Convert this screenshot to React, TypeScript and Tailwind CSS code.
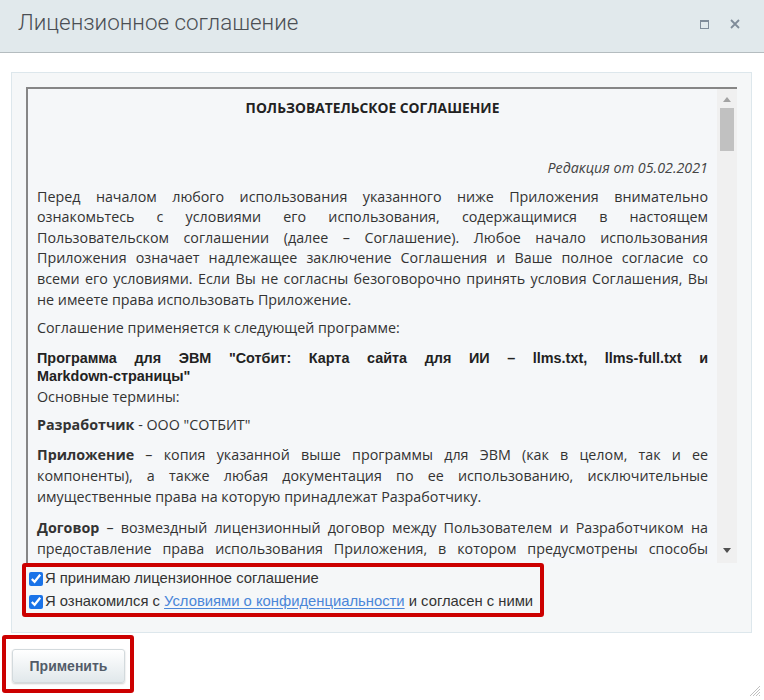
import React from 'react';

type Line = React.ReactNode;

const para1: Line[] = [
  'Перед началом любого использования указанного ниже Приложения внимательно',
  'ознакомьтесь с условиями его использования, содержащимися в настоящем',
  'Пользовательском соглашении (далее – Соглашение). Любое начало использования',
  'Приложения означает надлежащее заключение Соглашения и Ваше полное согласие со',
  'всеми его условиями. Если Вы не согласны безоговорочно принять условия Соглашения, Вы',
  'не имеете права использовать Приложение.',
];

const appLines: Line[] = [
  <><b className="font-bold">Приложение</b> – копия указанной выше программы для ЭВМ (как в целом, так и ее</>,
  'компоненты), а также любая документация по ее использованию, исключительные',
  'имущественные права на которую принадлежат Разработчику.',
];

const contractLines: Line[] = [
  <><b className="font-bold">Договор</b> – возмездный лицензионный договор между Пользователем и Разработчиком на</>,
  'предоставление права использования Приложения, в котором предусмотрены способы',
  'использования Приложения, размер вознаграждения и иные существенные условия.',
];

// each line is its own block so the breaks match; all but the last are justified
const Justified: React.FC<{ lines: Line[]; className?: string }> = ({ lines, className }) => (
  <div className={className}>
    {lines.map((l, i) => (
      <div
        key={i}
        className={i < lines.length - 1 ? 'whitespace-nowrap text-justify [text-align-last:justify]' : 'whitespace-nowrap'}
      >
        {l}
      </div>
    ))}
  </div>
);

const App: React.FC = () => {
  return (
    <div className="w-[764px] h-[700px] bg-white relative overflow-hidden flex flex-col font-['Liberation_Sans',Arial,sans-serif]">
      {/* Header */}
      <div className="h-[53px] shrink-0 bg-[#e1e9ec] border-b border-[#b4bcbf] flex items-center pl-[18px] pr-[24px]">
        <h1 className="flex-1 text-[22.4px] font-light text-[#4b4f54] font-['Roboto',sans-serif] pb-[6px]">
          Лицензионное соглашение
        </h1>
        <div className="flex items-center gap-[21px] pb-[4px]">
          <div className="w-[9px] h-[9px] border border-[#7f8c99] border-t-2" />
          <svg width="10" height="10" viewBox="0 0 10 10">
            <path d="M1 1 L9 9 M9 1 L1 9" stroke="#7f8c99" strokeWidth="1.8" />
          </svg>
        </div>
      </div>

      {/* Body */}
      <div className="flex-1 px-[11px] pt-[19px] flex flex-col">
        <div className="w-[741px] bg-[#f5f7f8] border border-[#dde7ec] px-[14px] pt-[14px] pb-[15px]">
          {/* Agreement frame */}
          <div className="h-[476px] flex border-l-2 border-t-2 border-[#868686] bg-[#f5f7f9] font-['Open_Sans',sans-serif] text-[14.3px] text-[#333] overflow-hidden">
            <div className="flex-1 pl-[9px] pr-[9px] pt-[9px] overflow-hidden">
              <div className="text-center font-bold text-[13.8px] leading-[20px] text-[#222]">
                ПОЛЬЗОВАТЕЛЬСКОЕ СОГЛАШЕНИЕ
              </div>
              <div className="mt-[40px] text-right italic leading-[20.6px] text-[#444]">Редакция от 05.02.2021</div>
              <Justified lines={para1} className="mt-[8px] leading-[20.6px]" />
              <div className="mt-[8px] leading-[20.6px]">Соглашение применяется к следующей программе:</div>
              <Justified
                className="mt-[10px] leading-[18px] font-['Liberation_Sans',Arial,sans-serif] font-bold text-[14.4px] text-[#222]"
                lines={['Программа для ЭВМ "Сотбит: Карта сайта для ИИ – llms.txt, llms-full.txt и', 'Markdown-страницы"']}
              />
              <div className="mt-[2px] leading-[20.6px]">Основные термины:</div>
              <div className="mt-[8px] leading-[20.6px]">
                <b className="font-bold">Разработчик</b> - ООО "СОТБИТ"
              </div>
              <Justified lines={appLines} className="mt-[9px] leading-[20.9px]" />
              <Justified lines={contractLines} className="mt-[10px] leading-[20.9px]" />
            </div>
            {/* scrollbar */}
            <div className="w-[20px] shrink-0 bg-[#f0f0f0] flex flex-col items-center">
              <svg width="8" height="5" viewBox="0 0 8 5" className="mt-[8px]">
                <path d="M0 5 L4 0 L8 5 Z" fill="#a3a3a3" />
              </svg>
              <div className="w-[14px] h-[43px] bg-[#c1c1c1] mt-[6px]" />
              <div className="flex-1" />
              <svg width="8" height="5" viewBox="0 0 8 5" className="mb-[10px]">
                <path d="M0 0 L8 0 L4 5 Z" fill="#505050" />
              </svg>
            </div>
          </div>

          {/* Checkboxes */}
          <div className="-ml-[4px] w-[522px] border-[4px] border-[#cc0000] rounded-[3px] pl-[3px] text-[14.8px] text-[#333] leading-[23px]">
            <label className="flex items-center gap-[2px]">
              <input type="checkbox" defaultChecked className="w-[14px] h-[14px] m-0 accent-[#1a73e8]" />
              <span>Я принимаю лицензионное соглашение</span>
            </label>
            <label className="flex items-center gap-[2px]">
              <input type="checkbox" defaultChecked className="w-[14px] h-[14px] m-0 accent-[#1a73e8]" />
              <span className="whitespace-nowrap">
                Я ознакомился с{' '}
                <a href="#" className="text-[#4a86d8] underline underline-offset-2">
                  Условиями о конфиденциальности
                </a>{' '}
                и согласен с ними
              </span>
            </label>
          </div>
        </div>

        {/* Apply */}
        <div className="mt-[2px] -ml-[9px] w-[132px] h-[58px] border-[4px] border-[#cc0000] rounded-[3px] pl-[6px] pt-[10px]">
          <button className="w-[113px] h-[34px] rounded-[3px] border border-[#d3dadd] bg-gradient-to-b from-white to-[#e1e8eb] shadow-[0_1px_2px_rgba(0,0,0,0.2)] text-[14px] font-bold text-[#535c69]">
            Применить
          </button>
        </div>
      </div>

      {/* resize grip */}
      <svg width="12" height="12" viewBox="0 0 12 12" className="absolute right-[3px] bottom-[3px]">
        <path d="M11 1 L1 11 M11 4 L4 11 M11 7 L7 11 M11 10 L10 11" stroke="#b0b0b0" strokeWidth="0.8" />
      </svg>
    </div>
  );
};

export default App;
